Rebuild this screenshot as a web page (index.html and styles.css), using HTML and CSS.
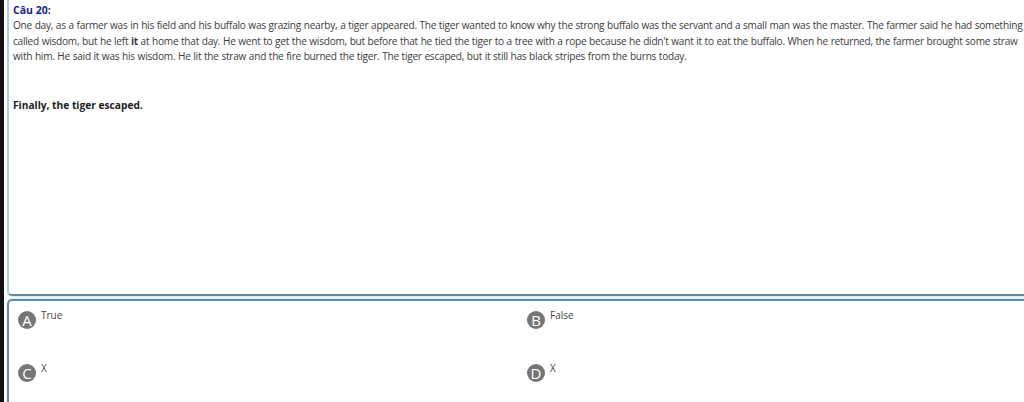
FILE: index.html
```html
<!DOCTYPE html>
<html lang="vi">
<head>
  <meta charset="UTF-8">
  <title>Câu 20</title>
  <link rel="stylesheet" href="styles.css">
</head>
<body>
  <div class="frame">
    <div class="edge"></div>
    <div class="content">

      <div class="question-box">
        <div class="q-title">Câu 20:</div>
        <p class="passage">One day, as a farmer was in his field and his buffalo was grazing nearby, a tiger appeared. The tiger wanted to know why the strong buffalo was the servant and a small man was the master. The farmer said he had something<br>called wisdom, but he left <b>it</b> at home that day. He went to get the wisdom, but before that he tied the tiger to a tree with a rope because he didn't want it to eat the buffalo. When he returned, the farmer brought some straw<br>with him. He said it was his wisdom. He lit the straw and the fire burned the tiger. The tiger escaped, but it still has black stripes from the burns today.</p>
        <p class="statement">Finally, the tiger escaped.</p>
      </div>

      <div class="answer-box">
        <div class="option"><span class="badge">A</span><span class="opt-text">True</span></div>
        <div class="option"><span class="badge">B</span><span class="opt-text">False</span></div>
        <div class="option"><span class="badge">C</span><span class="opt-text">X</span></div>
        <div class="option"><span class="badge">D</span><span class="opt-text">X</span></div>
      </div>

    </div>
  </div>
</body>
</html>
```

FILE: styles.css
```css
:root {
  --navy: #1a237e;
  --text: #3c3c3c;
  --border-dark: #5f8ba5;
  --border-light: #a8d2e4;
  --halo: #d3f0fb;
  --badge: #767676;
}

body {
  margin: 0;
  background: #fff;
  font-family: "Open Sans", "Noto Sans", sans-serif;
  color: var(--text);
  overflow: hidden;
}

.frame {
  display: flex;
  height: 402px;
}

.edge {
  width: 4px;
  flex: none;
  background: #111;
}

.content {
  flex: 1;
  padding-left: 3px;
  display: flex;
  flex-direction: column;
}

.question-box {
  height: 296px;
  flex: none;
  border-left: 2px solid var(--border-light);
  border-bottom: 2px solid var(--border-dark);
  border-bottom-left-radius: 5px;
  box-shadow: 0 1px 0 var(--halo);
  padding: 3px 0 0 4px;
  box-sizing: border-box;
}

.q-title {
  font-size: 10.5px;
  font-weight: 700;
  color: var(--navy);
  line-height: 14px;
}

.passage {
  margin: 1px 0 0;
  font-size: 10.1px;
  line-height: 15.5px;
  white-space: nowrap;
  letter-spacing: -0.24px;
  word-spacing: 0.3px;
}

.statement {
  margin: 33px 0 0;
  font-size: 10.2px;
  font-weight: 700;
  color: #222;
}

.answer-box {
  flex: 1;
  margin-top: 3px;
  border-left: 2px solid var(--border-dark);
  border-top: 2px solid var(--border-dark);
  border-top-left-radius: 5px;
  box-shadow: 0 -1px 0 var(--halo);
  display: grid;
  grid-template-columns: 509px 1fr;
  grid-auto-rows: 53px;
  padding: 8px 0 0 9px;
}

.option {
  display: flex;
  align-items: flex-start;
  gap: 5px;
}

.badge {
  width: 18px;
  height: 18px;
  border-radius: 50%;
  background: var(--badge);
  color: #fff;
  font-size: 15px;
  line-height: 19px;
  text-align: center;
  margin-top: 2px;
}

.opt-text {
  font-size: 10px;
  line-height: 12px;
  color: #444;
}
```
